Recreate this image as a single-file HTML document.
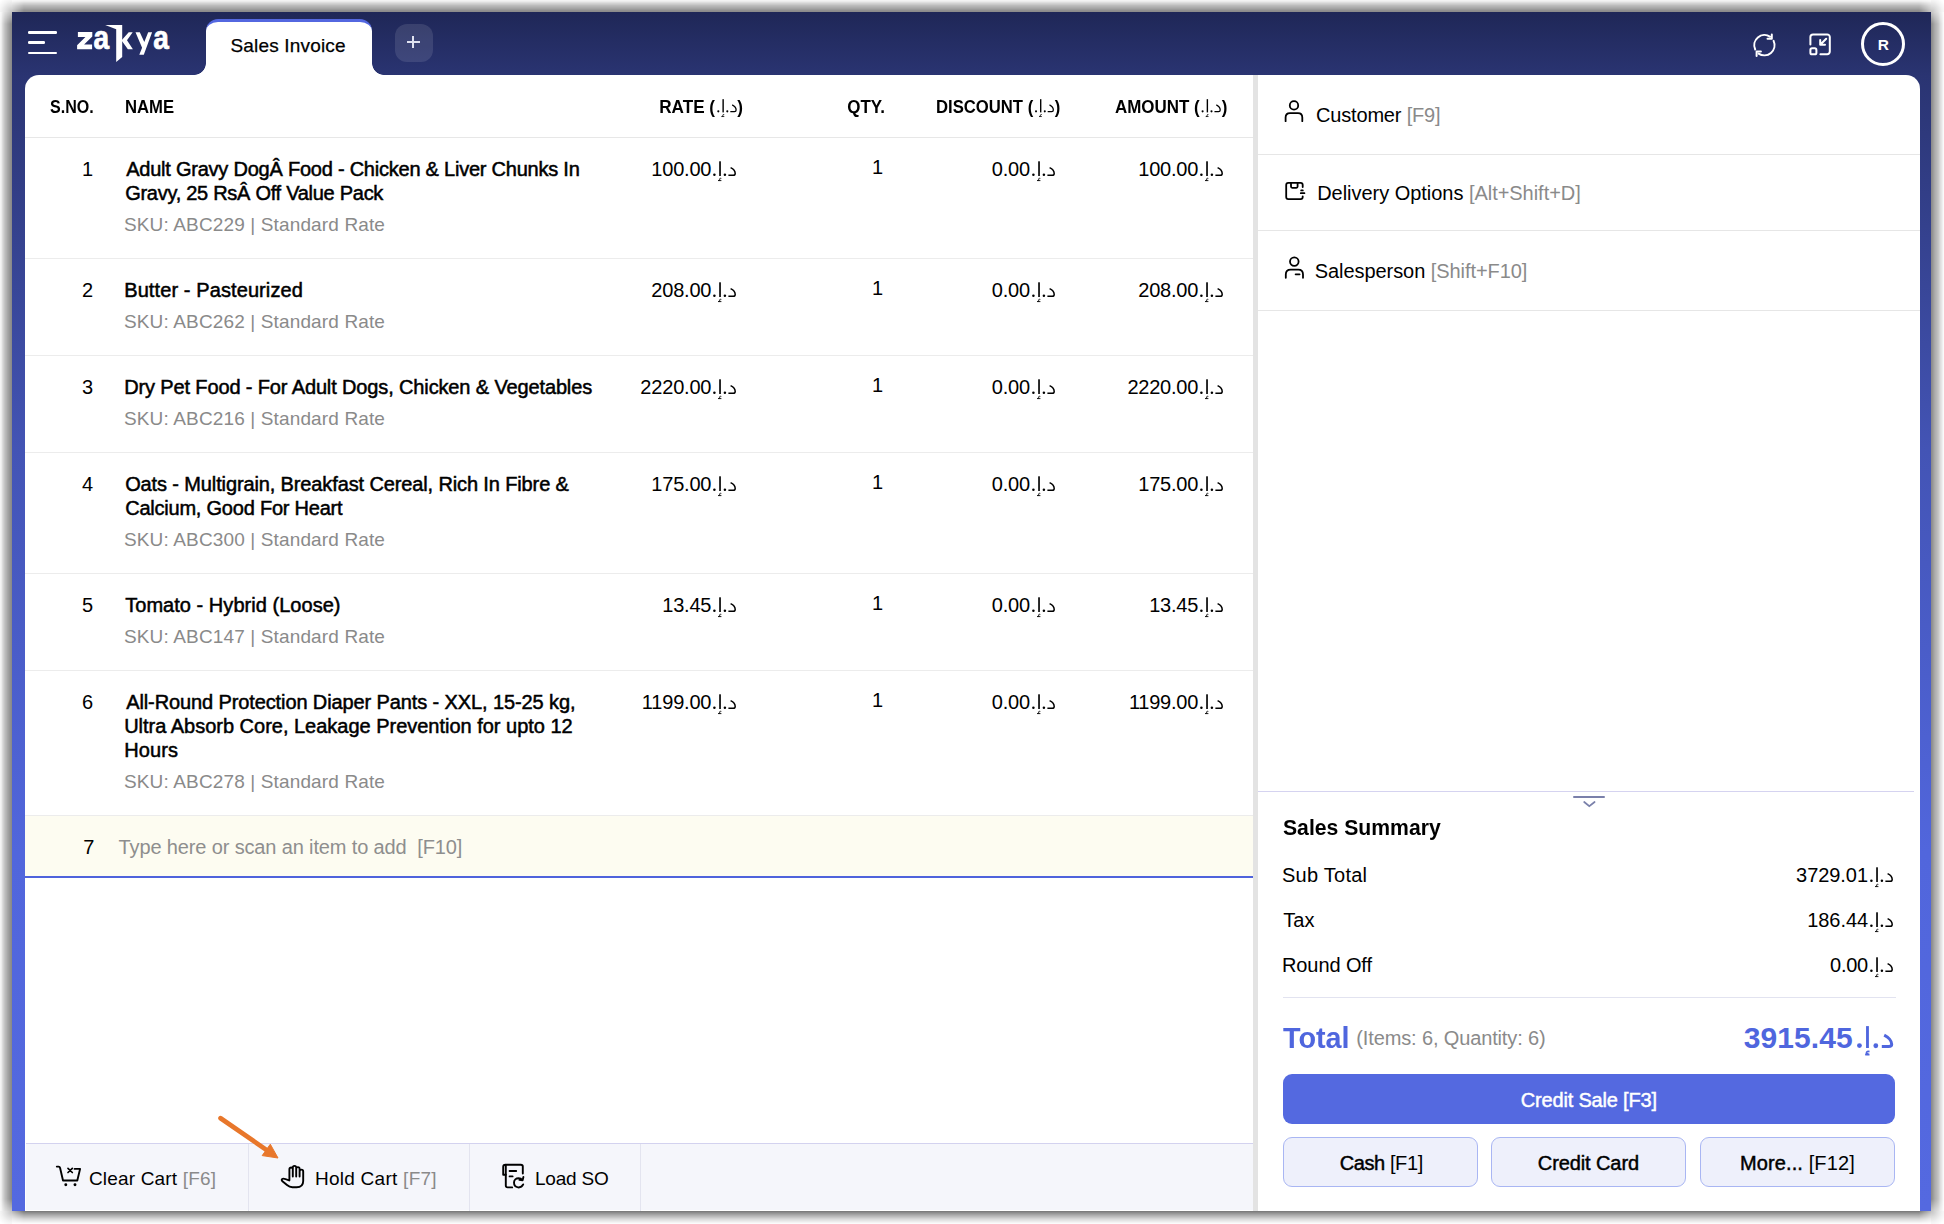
<!DOCTYPE html>
<html><head><meta charset="utf-8"><title>Sales Invoice</title>
<style>
html,body{margin:0;padding:0;}
body{width:1944px;height:1224px;position:relative;overflow:hidden;background:#fff;font-family:"Liberation Sans", sans-serif;}
.t{position:absolute;white-space:nowrap;font-family:"Liberation Sans", sans-serif;}
.aed{fill:currentColor;overflow:visible;}
#win{position:absolute;left:12px;top:12px;width:1919px;height:1199px;
background:linear-gradient(180deg,#1f2757 0%,#2a3472 5.3%,#4354b5 36.5%,#5166dc 70%,#5469e0 100%);
}
#tab{position:absolute;left:206px;top:19px;width:166px;height:56px;background:#fff;border-top:3.5px solid #5367e0;border-radius:12px 12px 0 0;box-sizing:border-box;}
</style></head><body>
<div style="position:absolute;left:0px;top:12px;width:12px;height:1199px;background:linear-gradient(to left,rgba(0,0,0,0.459) 0.5px,rgba(0,0,0,0.435) 1.5px,rgba(0,0,0,0.404) 2.5px,rgba(0,0,0,0.373) 3.5px,rgba(0,0,0,0.341) 4.5px,rgba(0,0,0,0.302) 5.5px,rgba(0,0,0,0.271) 6.5px,rgba(0,0,0,0.231) 7.5px,rgba(0,0,0,0.184) 8.5px,rgba(0,0,0,0.137) 9.5px,rgba(0,0,0,0.075) 10.5px,rgba(0,0,0,0.043) 11.5px,rgba(0,0,0,0) 12.5px);-webkit-mask-image:linear-gradient(to bottom, rgba(0,0,0,0.5) 0, #000 12px, #000 calc(100% - 12px), rgba(0,0,0,0.5) 100%);"></div>
<div style="position:absolute;left:12px;top:0px;width:1919px;height:12px;background:linear-gradient(to top,rgba(0,0,0,0.451) 0.5px,rgba(0,0,0,0.435) 1.5px,rgba(0,0,0,0.396) 2.5px,rgba(0,0,0,0.357) 3.5px,rgba(0,0,0,0.325) 4.5px,rgba(0,0,0,0.294) 5.5px,rgba(0,0,0,0.263) 6.5px,rgba(0,0,0,0.216) 7.5px,rgba(0,0,0,0.176) 8.5px,rgba(0,0,0,0.129) 9.5px,rgba(0,0,0,0.078) 10.5px,rgba(0,0,0,0.047) 11.5px,rgba(0,0,0,0) 12.5px);-webkit-mask-image:linear-gradient(to right, rgba(0,0,0,0.5) 0, #000 12px, #000 calc(100% - 12px), rgba(0,0,0,0.5) 100%);"></div>
<div style="position:absolute;left:1931px;top:12px;width:13px;height:1199px;background:linear-gradient(to right,rgba(0,0,0,0.451) 0.5px,rgba(0,0,0,0.420) 1.5px,rgba(0,0,0,0.380) 2.5px,rgba(0,0,0,0.341) 3.5px,rgba(0,0,0,0.310) 4.5px,rgba(0,0,0,0.286) 5.5px,rgba(0,0,0,0.255) 6.5px,rgba(0,0,0,0.224) 7.5px,rgba(0,0,0,0.176) 8.5px,rgba(0,0,0,0.129) 9.5px,rgba(0,0,0,0.098) 10.5px,rgba(0,0,0,0.059) 11.5px,rgba(0,0,0,0.020) 12.5px,rgba(0,0,0,0) 13.5px);-webkit-mask-image:linear-gradient(to bottom, rgba(0,0,0,0.5) 0, #000 12px, #000 calc(100% - 12px), rgba(0,0,0,0.5) 100%);"></div>
<div style="position:absolute;left:12px;top:1211px;width:1919px;height:13px;background:linear-gradient(to bottom,rgba(0,0,0,0.514) 0.5px,rgba(0,0,0,0.459) 1.5px,rgba(0,0,0,0.408) 2.5px,rgba(0,0,0,0.357) 3.5px,rgba(0,0,0,0.310) 4.5px,rgba(0,0,0,0.267) 5.5px,rgba(0,0,0,0.224) 6.5px,rgba(0,0,0,0.176) 7.5px,rgba(0,0,0,0.137) 8.5px,rgba(0,0,0,0.106) 9.5px,rgba(0,0,0,0.075) 10.5px,rgba(0,0,0,0.043) 11.5px,rgba(0,0,0,0.016) 12.5px,rgba(0,0,0,0) 13.5px);-webkit-mask-image:linear-gradient(to right, rgba(0,0,0,0.5) 0, #000 12px, #000 calc(100% - 12px), rgba(0,0,0,0.5) 100%);"></div>
<div style="position:absolute;left:0px;top:0px;width:12px;height:12px;background:radial-gradient(circle at 100% 100%, rgba(0,0,0,0.24) 0, rgba(0,0,0,0.13) 6px, rgba(0,0,0,0.05) 11px, rgba(0,0,0,0) 16px);"></div>
<div style="position:absolute;left:1931px;top:0px;width:13px;height:12px;background:radial-gradient(circle at 0 100%, rgba(0,0,0,0.24) 0, rgba(0,0,0,0.13) 6px, rgba(0,0,0,0.05) 11px, rgba(0,0,0,0) 16px);"></div>
<div style="position:absolute;left:0px;top:1211px;width:12px;height:13px;background:radial-gradient(circle at 100% 0, rgba(0,0,0,0.24) 0, rgba(0,0,0,0.13) 6px, rgba(0,0,0,0.05) 11px, rgba(0,0,0,0) 16px);"></div>
<div style="position:absolute;left:1931px;top:1211px;width:13px;height:13px;background:radial-gradient(circle at 0 0, rgba(0,0,0,0.24) 0, rgba(0,0,0,0.13) 6px, rgba(0,0,0,0.05) 11px, rgba(0,0,0,0) 16px);"></div>
<div id="win"></div>
<div style="position:absolute;left:25px;top:75px;width:1895px;height:1136px;background:#fff;border-radius:14px 14px 0 0;"></div>
<div id="tab"></div>
<div style="position:absolute;left:194px;top:63px;width:12px;height:12px;background:radial-gradient(circle 12px at 0 0, transparent 11.5px, #fff 12.2px);"></div>
<div style="position:absolute;left:372px;top:63px;width:12px;height:12px;background:radial-gradient(circle 12px at 100% 0, transparent 11.5px, #fff 12.2px);"></div>
<div class="t" id="tabtxt" style="font-size:19px;line-height:23.75px;font-weight:400;color:#000;top:33.54px;letter-spacing:0.184px;-webkit-text-stroke:0.25px #000;left:230.4px;">Sales Invoice</div>
<div style="position:absolute;left:395px;top:24px;width:38px;height:38px;background:rgba(255,255,255,0.11);border-radius:12px;"></div>
<div style="position:absolute;left:407px;top:41px;width:12.5px;height:2px;background:#dfe2f0;"></div>
<div style="position:absolute;left:412.2px;top:35.8px;width:2px;height:12.5px;background:#dfe2f0;"></div>
<div style="position:absolute;left:28px;top:31.2px;width:28.5px;height:2.5px;background:#fff;border-radius:1.2px;"></div>
<div style="position:absolute;left:28px;top:41.2px;width:17px;height:2.5px;background:#fff;border-radius:1.2px;"></div>
<div style="position:absolute;left:28px;top:51.5px;width:28.5px;height:2.5px;background:#fff;border-radius:1.2px;"></div>
<svg style="position:absolute;left:70px;top:20px" width="110" height="48" viewBox="70 20 110 48" fill="#fff">
<path d="M77.9 32.1 L92.3 32.1 L92.3 36.5 L84.1 44.4 L92.1 44.4 L92.1 49.3 L77.1 49.3 L77.1 45.2 L85.4 37 L77.9 37 Z"/>
<text x="0" y="0" font-family="Liberation Sans" font-weight="700" font-size="33" stroke="#fff" stroke-width="0.7" transform="translate(93.6 49) scale(0.85 1)">a</text>
<path d="M105.2 25.1 L122.2 25.1 L122.2 57 L116.2 61.9 L116.2 29.3 Z"/>
<path d="M121.9 39.9 L128.7 32.3 L132.7 32.3 L127 40.2 L132.9 49.3 L127.9 49.3 L121.9 40.9 Z"/>
<path d="M135.5 32.3 L139.8 32.3 L144.3 42 L148.2 32.3 L152.1 32.3 L143.8 54.8 L139.3 54.8 L142.1 47.7 Z"/>
<text x="0" y="0" font-family="Liberation Sans" font-weight="700" font-size="33" stroke="#fff" stroke-width="0.7" transform="translate(153.3 49) scale(0.85 1)">a</text>
</svg>
<svg style="position:absolute;left:1748px;top:30px" width="32" height="30" viewBox="1748 30 32 30" fill="none" stroke="#fff" stroke-width="2" stroke-linecap="round" stroke-linejoin="round">
<path d="M1770.2 36.8 A10.2 10.2 0 0 0 1755.2 49.5"/>
<path d="M1771.8 34.4 V38.7 H1767.5"/>
<path d="M1773.6 40.9 A10.2 10.2 0 0 1 1758.6 53.6"/>
<path d="M1756.6 56 V51.6 H1760.9"/>
</svg>
<svg style="position:absolute;left:1805px;top:29px" width="30" height="30" viewBox="1805 29 30 30" fill="none" stroke="#fff" stroke-width="2" stroke-linecap="round" stroke-linejoin="round">
<path d="M1810.4 44.5 V37 A2.6 2.6 0 0 1 1813 34.4 H1827.2 A2.6 2.6 0 0 1 1829.8 37 V51.6 A2.6 2.6 0 0 1 1827.2 54.2 H1820.4"/>
<rect x="1810.4" y="48.3" width="6" height="6" rx="1.6"/>
<path d="M1826.2 38.8 L1820.2 44.8 M1820.2 40 V44.8 H1825"/>
</svg>
<div style="position:absolute;left:1861px;top:22px;width:44px;height:44px;box-sizing:border-box;border:3.2px solid #fff;border-radius:50%;"></div>
<div class="t" style="font-size:15.5px;line-height:19.38px;font-weight:700;color:#fff;top:34.84px;left:1483.4px;width:800px;text-align:center;">R</div>
<div class="t" id="h_sno" style="font-size:18px;line-height:22.5px;font-weight:700;color:#000;top:95.71px;left:50.0px;transform:scaleX(0.8918);transform-origin:left center;">S.NO.</div>
<div class="t" id="h_name" style="font-size:18px;line-height:22.5px;font-weight:700;color:#000;top:95.71px;left:125.0px;transform:scaleX(0.9270);transform-origin:left center;">NAME</div>
<div class="t" id="h_rate" style="font-size:18px;line-height:22.5px;font-weight:700;color:#000;top:95.71px;right:1201.2px;text-align:right;transform:scaleX(0.9517);transform-origin:right center;">RATE (<svg class="aed" viewBox="0 -16 26 22" style="width:1.3em;height:1.1em;vertical-align:-0.3em"><circle cx="3.4" cy="-1.2" r="1.25"/><rect x="8.2" y="-14.7" width="1.65" height="14.7"/><path d="M10.3 2.4 C8.8 1.9 7.9 3.2 9.1 3.8 L7.2 4.6 L10.4 4.6" fill="none" stroke="currentColor" stroke-width="0.9"/><circle cx="13.9" cy="-1.2" r="1.25"/><path d="M19.6 -8.4 C22.2 -7.1 24.2 -4.8 24.2 -2.6 C24.2 -1.1 23.4 -0.8 22.2 -0.8 L17.4 -0.8" fill="none" stroke="currentColor" stroke-width="1.5"/></svg>)</div>
<div class="t" id="h_qty" style="font-size:18px;line-height:22.5px;font-weight:700;color:#000;top:95.71px;right:1059.2px;text-align:right;transform:scaleX(0.9438);transform-origin:right center;">QTY.</div>
<div class="t" id="h_disc" style="font-size:18px;line-height:22.5px;font-weight:700;color:#000;top:95.71px;right:884.0px;text-align:right;transform:scaleX(0.9254);transform-origin:right center;">DISCOUNT (<svg class="aed" viewBox="0 -16 26 22" style="width:1.3em;height:1.1em;vertical-align:-0.3em"><circle cx="3.4" cy="-1.2" r="1.25"/><rect x="8.2" y="-14.7" width="1.65" height="14.7"/><path d="M10.3 2.4 C8.8 1.9 7.9 3.2 9.1 3.8 L7.2 4.6 L10.4 4.6" fill="none" stroke="currentColor" stroke-width="0.9"/><circle cx="13.9" cy="-1.2" r="1.25"/><path d="M19.6 -8.4 C22.2 -7.1 24.2 -4.8 24.2 -2.6 C24.2 -1.1 23.4 -0.8 22.2 -0.8 L17.4 -0.8" fill="none" stroke="currentColor" stroke-width="1.5"/></svg>)</div>
<div class="t" id="h_amt" style="font-size:18px;line-height:22.5px;font-weight:700;color:#000;top:95.71px;right:717.0px;text-align:right;transform:scaleX(0.9412);transform-origin:right center;">AMOUNT (<svg class="aed" viewBox="0 -16 26 22" style="width:1.3em;height:1.1em;vertical-align:-0.3em"><circle cx="3.4" cy="-1.2" r="1.25"/><rect x="8.2" y="-14.7" width="1.65" height="14.7"/><path d="M10.3 2.4 C8.8 1.9 7.9 3.2 9.1 3.8 L7.2 4.6 L10.4 4.6" fill="none" stroke="currentColor" stroke-width="0.9"/><circle cx="13.9" cy="-1.2" r="1.25"/><path d="M19.6 -8.4 C22.2 -7.1 24.2 -4.8 24.2 -2.6 C24.2 -1.1 23.4 -0.8 22.2 -0.8 L17.4 -0.8" fill="none" stroke="currentColor" stroke-width="1.5"/></svg>)</div>
<div style="position:absolute;left:25px;top:137px;width:1228px;height:1px;background:#e7e7e7;"></div>
<div class="t" style="font-size:20px;line-height:25.0px;font-weight:400;color:#000;top:157.07px;right:1850.8px;text-align:right;">1</div>
<div class="t" id="n0_0" style="font-size:20px;line-height:25.0px;font-weight:400;color:#000;top:157.07px;letter-spacing:-0.23px;-webkit-text-stroke:0.5px #000;left:126.2px;">Adult Gravy DogÂ Food - Chicken &amp; Liver Chunks In</div>
<div class="t" id="n0_1" style="font-size:20px;line-height:25.0px;font-weight:400;color:#000;top:181.07px;letter-spacing:-0.277px;-webkit-text-stroke:0.5px #000;left:125.2px;">Gravy, 25 RsÂ Off Value Pack</div>
<div class="t" id="sku0" style="font-size:19px;line-height:23.75px;font-weight:400;color:#8a8a8a;top:213.04px;letter-spacing:0.137px;left:124.0px;">SKU: ABC229 | Standard Rate</div>
<div class="t" id="rate0" style="font-size:20px;line-height:25.0px;font-weight:400;color:#000;top:156.57px;letter-spacing:-0.185px;right:1206.7px;text-align:right;">100.00<svg class="aed" viewBox="0 -16 26 22" style="width:1.3em;height:1.1em;vertical-align:-0.3em"><circle cx="3.4" cy="-1.2" r="1.25"/><rect x="8.2" y="-14.7" width="1.65" height="14.7"/><path d="M10.3 2.4 C8.8 1.9 7.9 3.2 9.1 3.8 L7.2 4.6 L10.4 4.6" fill="none" stroke="currentColor" stroke-width="0.9"/><circle cx="13.9" cy="-1.2" r="1.25"/><path d="M19.6 -8.4 C22.2 -7.1 24.2 -4.8 24.2 -2.6 C24.2 -1.1 23.4 -0.8 22.2 -0.8 L17.4 -0.8" fill="none" stroke="currentColor" stroke-width="1.5"/></svg></div>
<div class="t" style="font-size:20px;line-height:25.0px;font-weight:400;color:#000;top:155.07px;right:1060.8px;text-align:right;">1</div>
<div class="t" id="disc0" style="font-size:20px;line-height:25.0px;font-weight:400;color:#000;top:156.57px;letter-spacing:-0.175px;right:888.0px;text-align:right;">0.00<svg class="aed" viewBox="0 -16 26 22" style="width:1.3em;height:1.1em;vertical-align:-0.3em"><circle cx="3.4" cy="-1.2" r="1.25"/><rect x="8.2" y="-14.7" width="1.65" height="14.7"/><path d="M10.3 2.4 C8.8 1.9 7.9 3.2 9.1 3.8 L7.2 4.6 L10.4 4.6" fill="none" stroke="currentColor" stroke-width="0.9"/><circle cx="13.9" cy="-1.2" r="1.25"/><path d="M19.6 -8.4 C22.2 -7.1 24.2 -4.8 24.2 -2.6 C24.2 -1.1 23.4 -0.8 22.2 -0.8 L17.4 -0.8" fill="none" stroke="currentColor" stroke-width="1.5"/></svg></div>
<div class="t" id="amt0" style="font-size:20px;line-height:25.0px;font-weight:400;color:#000;top:156.57px;letter-spacing:-0.235px;right:719.9000000000001px;text-align:right;">100.00<svg class="aed" viewBox="0 -16 26 22" style="width:1.3em;height:1.1em;vertical-align:-0.3em"><circle cx="3.4" cy="-1.2" r="1.25"/><rect x="8.2" y="-14.7" width="1.65" height="14.7"/><path d="M10.3 2.4 C8.8 1.9 7.9 3.2 9.1 3.8 L7.2 4.6 L10.4 4.6" fill="none" stroke="currentColor" stroke-width="0.9"/><circle cx="13.9" cy="-1.2" r="1.25"/><path d="M19.6 -8.4 C22.2 -7.1 24.2 -4.8 24.2 -2.6 C24.2 -1.1 23.4 -0.8 22.2 -0.8 L17.4 -0.8" fill="none" stroke="currentColor" stroke-width="1.5"/></svg></div>
<div style="position:absolute;left:25px;top:258px;width:1228px;height:1px;background:#ececec;"></div>
<div class="t" style="font-size:20px;line-height:25.0px;font-weight:400;color:#000;top:278.07px;right:1850.8px;text-align:right;">2</div>
<div class="t" id="n1_0" style="font-size:20px;line-height:25.0px;font-weight:400;color:#000;top:278.07px;letter-spacing:0.101px;-webkit-text-stroke:0.5px #000;left:124.2px;">Butter - Pasteurized</div>
<div class="t" id="sku1" style="font-size:19px;line-height:23.75px;font-weight:400;color:#8a8a8a;top:310.04px;letter-spacing:0.137px;left:124.0px;">SKU: ABC262 | Standard Rate</div>
<div class="t" id="rate1" style="font-size:20px;line-height:25.0px;font-weight:400;color:#000;top:277.57px;letter-spacing:-0.185px;right:1206.7px;text-align:right;">208.00<svg class="aed" viewBox="0 -16 26 22" style="width:1.3em;height:1.1em;vertical-align:-0.3em"><circle cx="3.4" cy="-1.2" r="1.25"/><rect x="8.2" y="-14.7" width="1.65" height="14.7"/><path d="M10.3 2.4 C8.8 1.9 7.9 3.2 9.1 3.8 L7.2 4.6 L10.4 4.6" fill="none" stroke="currentColor" stroke-width="0.9"/><circle cx="13.9" cy="-1.2" r="1.25"/><path d="M19.6 -8.4 C22.2 -7.1 24.2 -4.8 24.2 -2.6 C24.2 -1.1 23.4 -0.8 22.2 -0.8 L17.4 -0.8" fill="none" stroke="currentColor" stroke-width="1.5"/></svg></div>
<div class="t" style="font-size:20px;line-height:25.0px;font-weight:400;color:#000;top:276.07px;right:1060.8px;text-align:right;">1</div>
<div class="t" id="disc1" style="font-size:20px;line-height:25.0px;font-weight:400;color:#000;top:277.57px;letter-spacing:-0.175px;right:888.0px;text-align:right;">0.00<svg class="aed" viewBox="0 -16 26 22" style="width:1.3em;height:1.1em;vertical-align:-0.3em"><circle cx="3.4" cy="-1.2" r="1.25"/><rect x="8.2" y="-14.7" width="1.65" height="14.7"/><path d="M10.3 2.4 C8.8 1.9 7.9 3.2 9.1 3.8 L7.2 4.6 L10.4 4.6" fill="none" stroke="currentColor" stroke-width="0.9"/><circle cx="13.9" cy="-1.2" r="1.25"/><path d="M19.6 -8.4 C22.2 -7.1 24.2 -4.8 24.2 -2.6 C24.2 -1.1 23.4 -0.8 22.2 -0.8 L17.4 -0.8" fill="none" stroke="currentColor" stroke-width="1.5"/></svg></div>
<div class="t" id="amt1" style="font-size:20px;line-height:25.0px;font-weight:400;color:#000;top:277.57px;letter-spacing:-0.235px;right:719.9000000000001px;text-align:right;">208.00<svg class="aed" viewBox="0 -16 26 22" style="width:1.3em;height:1.1em;vertical-align:-0.3em"><circle cx="3.4" cy="-1.2" r="1.25"/><rect x="8.2" y="-14.7" width="1.65" height="14.7"/><path d="M10.3 2.4 C8.8 1.9 7.9 3.2 9.1 3.8 L7.2 4.6 L10.4 4.6" fill="none" stroke="currentColor" stroke-width="0.9"/><circle cx="13.9" cy="-1.2" r="1.25"/><path d="M19.6 -8.4 C22.2 -7.1 24.2 -4.8 24.2 -2.6 C24.2 -1.1 23.4 -0.8 22.2 -0.8 L17.4 -0.8" fill="none" stroke="currentColor" stroke-width="1.5"/></svg></div>
<div style="position:absolute;left:25px;top:355px;width:1228px;height:1px;background:#ececec;"></div>
<div class="t" style="font-size:20px;line-height:25.0px;font-weight:400;color:#000;top:375.07px;right:1850.8px;text-align:right;">3</div>
<div class="t" id="n2_0" style="font-size:20px;line-height:25.0px;font-weight:400;color:#000;top:375.07px;letter-spacing:-0.134px;-webkit-text-stroke:0.5px #000;left:124.2px;">Dry Pet Food - For Adult Dogs, Chicken &amp; Vegetables</div>
<div class="t" id="sku2" style="font-size:19px;line-height:23.75px;font-weight:400;color:#8a8a8a;top:407.04px;letter-spacing:0.137px;left:124.0px;">SKU: ABC216 | Standard Rate</div>
<div class="t" id="rate2" style="font-size:20px;line-height:25.0px;font-weight:400;color:#000;top:374.57px;letter-spacing:-0.185px;right:1206.7px;text-align:right;">2220.00<svg class="aed" viewBox="0 -16 26 22" style="width:1.3em;height:1.1em;vertical-align:-0.3em"><circle cx="3.4" cy="-1.2" r="1.25"/><rect x="8.2" y="-14.7" width="1.65" height="14.7"/><path d="M10.3 2.4 C8.8 1.9 7.9 3.2 9.1 3.8 L7.2 4.6 L10.4 4.6" fill="none" stroke="currentColor" stroke-width="0.9"/><circle cx="13.9" cy="-1.2" r="1.25"/><path d="M19.6 -8.4 C22.2 -7.1 24.2 -4.8 24.2 -2.6 C24.2 -1.1 23.4 -0.8 22.2 -0.8 L17.4 -0.8" fill="none" stroke="currentColor" stroke-width="1.5"/></svg></div>
<div class="t" style="font-size:20px;line-height:25.0px;font-weight:400;color:#000;top:373.07px;right:1060.8px;text-align:right;">1</div>
<div class="t" id="disc2" style="font-size:20px;line-height:25.0px;font-weight:400;color:#000;top:374.57px;letter-spacing:-0.175px;right:888.0px;text-align:right;">0.00<svg class="aed" viewBox="0 -16 26 22" style="width:1.3em;height:1.1em;vertical-align:-0.3em"><circle cx="3.4" cy="-1.2" r="1.25"/><rect x="8.2" y="-14.7" width="1.65" height="14.7"/><path d="M10.3 2.4 C8.8 1.9 7.9 3.2 9.1 3.8 L7.2 4.6 L10.4 4.6" fill="none" stroke="currentColor" stroke-width="0.9"/><circle cx="13.9" cy="-1.2" r="1.25"/><path d="M19.6 -8.4 C22.2 -7.1 24.2 -4.8 24.2 -2.6 C24.2 -1.1 23.4 -0.8 22.2 -0.8 L17.4 -0.8" fill="none" stroke="currentColor" stroke-width="1.5"/></svg></div>
<div class="t" id="amt2" style="font-size:20px;line-height:25.0px;font-weight:400;color:#000;top:374.57px;letter-spacing:-0.235px;right:719.9000000000001px;text-align:right;">2220.00<svg class="aed" viewBox="0 -16 26 22" style="width:1.3em;height:1.1em;vertical-align:-0.3em"><circle cx="3.4" cy="-1.2" r="1.25"/><rect x="8.2" y="-14.7" width="1.65" height="14.7"/><path d="M10.3 2.4 C8.8 1.9 7.9 3.2 9.1 3.8 L7.2 4.6 L10.4 4.6" fill="none" stroke="currentColor" stroke-width="0.9"/><circle cx="13.9" cy="-1.2" r="1.25"/><path d="M19.6 -8.4 C22.2 -7.1 24.2 -4.8 24.2 -2.6 C24.2 -1.1 23.4 -0.8 22.2 -0.8 L17.4 -0.8" fill="none" stroke="currentColor" stroke-width="1.5"/></svg></div>
<div style="position:absolute;left:25px;top:452px;width:1228px;height:1px;background:#ececec;"></div>
<div class="t" style="font-size:20px;line-height:25.0px;font-weight:400;color:#000;top:472.07px;right:1850.8px;text-align:right;">4</div>
<div class="t" id="n3_0" style="font-size:20px;line-height:25.0px;font-weight:400;color:#000;top:472.07px;letter-spacing:-0.126px;-webkit-text-stroke:0.5px #000;left:125.2px;">Oats - Multigrain, Breakfast Cereal, Rich In Fibre &amp;</div>
<div class="t" id="n3_1" style="font-size:20px;line-height:25.0px;font-weight:400;color:#000;top:496.07px;letter-spacing:-0.223px;-webkit-text-stroke:0.5px #000;left:125.2px;">Calcium, Good For Heart</div>
<div class="t" id="sku3" style="font-size:19px;line-height:23.75px;font-weight:400;color:#8a8a8a;top:528.04px;letter-spacing:0.137px;left:124.0px;">SKU: ABC300 | Standard Rate</div>
<div class="t" id="rate3" style="font-size:20px;line-height:25.0px;font-weight:400;color:#000;top:471.57px;letter-spacing:-0.185px;right:1206.7px;text-align:right;">175.00<svg class="aed" viewBox="0 -16 26 22" style="width:1.3em;height:1.1em;vertical-align:-0.3em"><circle cx="3.4" cy="-1.2" r="1.25"/><rect x="8.2" y="-14.7" width="1.65" height="14.7"/><path d="M10.3 2.4 C8.8 1.9 7.9 3.2 9.1 3.8 L7.2 4.6 L10.4 4.6" fill="none" stroke="currentColor" stroke-width="0.9"/><circle cx="13.9" cy="-1.2" r="1.25"/><path d="M19.6 -8.4 C22.2 -7.1 24.2 -4.8 24.2 -2.6 C24.2 -1.1 23.4 -0.8 22.2 -0.8 L17.4 -0.8" fill="none" stroke="currentColor" stroke-width="1.5"/></svg></div>
<div class="t" style="font-size:20px;line-height:25.0px;font-weight:400;color:#000;top:470.07px;right:1060.8px;text-align:right;">1</div>
<div class="t" id="disc3" style="font-size:20px;line-height:25.0px;font-weight:400;color:#000;top:471.57px;letter-spacing:-0.175px;right:888.0px;text-align:right;">0.00<svg class="aed" viewBox="0 -16 26 22" style="width:1.3em;height:1.1em;vertical-align:-0.3em"><circle cx="3.4" cy="-1.2" r="1.25"/><rect x="8.2" y="-14.7" width="1.65" height="14.7"/><path d="M10.3 2.4 C8.8 1.9 7.9 3.2 9.1 3.8 L7.2 4.6 L10.4 4.6" fill="none" stroke="currentColor" stroke-width="0.9"/><circle cx="13.9" cy="-1.2" r="1.25"/><path d="M19.6 -8.4 C22.2 -7.1 24.2 -4.8 24.2 -2.6 C24.2 -1.1 23.4 -0.8 22.2 -0.8 L17.4 -0.8" fill="none" stroke="currentColor" stroke-width="1.5"/></svg></div>
<div class="t" id="amt3" style="font-size:20px;line-height:25.0px;font-weight:400;color:#000;top:471.57px;letter-spacing:-0.235px;right:719.9000000000001px;text-align:right;">175.00<svg class="aed" viewBox="0 -16 26 22" style="width:1.3em;height:1.1em;vertical-align:-0.3em"><circle cx="3.4" cy="-1.2" r="1.25"/><rect x="8.2" y="-14.7" width="1.65" height="14.7"/><path d="M10.3 2.4 C8.8 1.9 7.9 3.2 9.1 3.8 L7.2 4.6 L10.4 4.6" fill="none" stroke="currentColor" stroke-width="0.9"/><circle cx="13.9" cy="-1.2" r="1.25"/><path d="M19.6 -8.4 C22.2 -7.1 24.2 -4.8 24.2 -2.6 C24.2 -1.1 23.4 -0.8 22.2 -0.8 L17.4 -0.8" fill="none" stroke="currentColor" stroke-width="1.5"/></svg></div>
<div style="position:absolute;left:25px;top:573px;width:1228px;height:1px;background:#ececec;"></div>
<div class="t" style="font-size:20px;line-height:25.0px;font-weight:400;color:#000;top:593.07px;right:1850.8px;text-align:right;">5</div>
<div class="t" id="n4_0" style="font-size:20px;line-height:25.0px;font-weight:400;color:#000;top:593.07px;letter-spacing:0.036px;-webkit-text-stroke:0.5px #000;left:125.2px;">Tomato - Hybrid (Loose)</div>
<div class="t" id="sku4" style="font-size:19px;line-height:23.75px;font-weight:400;color:#8a8a8a;top:625.04px;letter-spacing:0.137px;left:124.0px;">SKU: ABC147 | Standard Rate</div>
<div class="t" id="rate4" style="font-size:20px;line-height:25.0px;font-weight:400;color:#000;top:592.57px;letter-spacing:-0.185px;right:1206.7px;text-align:right;">13.45<svg class="aed" viewBox="0 -16 26 22" style="width:1.3em;height:1.1em;vertical-align:-0.3em"><circle cx="3.4" cy="-1.2" r="1.25"/><rect x="8.2" y="-14.7" width="1.65" height="14.7"/><path d="M10.3 2.4 C8.8 1.9 7.9 3.2 9.1 3.8 L7.2 4.6 L10.4 4.6" fill="none" stroke="currentColor" stroke-width="0.9"/><circle cx="13.9" cy="-1.2" r="1.25"/><path d="M19.6 -8.4 C22.2 -7.1 24.2 -4.8 24.2 -2.6 C24.2 -1.1 23.4 -0.8 22.2 -0.8 L17.4 -0.8" fill="none" stroke="currentColor" stroke-width="1.5"/></svg></div>
<div class="t" style="font-size:20px;line-height:25.0px;font-weight:400;color:#000;top:591.07px;right:1060.8px;text-align:right;">1</div>
<div class="t" id="disc4" style="font-size:20px;line-height:25.0px;font-weight:400;color:#000;top:592.57px;letter-spacing:-0.175px;right:888.0px;text-align:right;">0.00<svg class="aed" viewBox="0 -16 26 22" style="width:1.3em;height:1.1em;vertical-align:-0.3em"><circle cx="3.4" cy="-1.2" r="1.25"/><rect x="8.2" y="-14.7" width="1.65" height="14.7"/><path d="M10.3 2.4 C8.8 1.9 7.9 3.2 9.1 3.8 L7.2 4.6 L10.4 4.6" fill="none" stroke="currentColor" stroke-width="0.9"/><circle cx="13.9" cy="-1.2" r="1.25"/><path d="M19.6 -8.4 C22.2 -7.1 24.2 -4.8 24.2 -2.6 C24.2 -1.1 23.4 -0.8 22.2 -0.8 L17.4 -0.8" fill="none" stroke="currentColor" stroke-width="1.5"/></svg></div>
<div class="t" id="amt4" style="font-size:20px;line-height:25.0px;font-weight:400;color:#000;top:592.57px;letter-spacing:-0.235px;right:719.9000000000001px;text-align:right;">13.45<svg class="aed" viewBox="0 -16 26 22" style="width:1.3em;height:1.1em;vertical-align:-0.3em"><circle cx="3.4" cy="-1.2" r="1.25"/><rect x="8.2" y="-14.7" width="1.65" height="14.7"/><path d="M10.3 2.4 C8.8 1.9 7.9 3.2 9.1 3.8 L7.2 4.6 L10.4 4.6" fill="none" stroke="currentColor" stroke-width="0.9"/><circle cx="13.9" cy="-1.2" r="1.25"/><path d="M19.6 -8.4 C22.2 -7.1 24.2 -4.8 24.2 -2.6 C24.2 -1.1 23.4 -0.8 22.2 -0.8 L17.4 -0.8" fill="none" stroke="currentColor" stroke-width="1.5"/></svg></div>
<div style="position:absolute;left:25px;top:670px;width:1228px;height:1px;background:#ececec;"></div>
<div class="t" style="font-size:20px;line-height:25.0px;font-weight:400;color:#000;top:690.07px;right:1850.8px;text-align:right;">6</div>
<div class="t" id="n5_0" style="font-size:20px;line-height:25.0px;font-weight:400;color:#000;top:690.07px;letter-spacing:-0.11px;-webkit-text-stroke:0.5px #000;left:126.2px;">All-Round Protection Diaper Pants - XXL, 15-25 kg,</div>
<div class="t" id="n5_1" style="font-size:20px;line-height:25.0px;font-weight:400;color:#000;top:714.07px;letter-spacing:-0.014px;-webkit-text-stroke:0.5px #000;left:124.2px;">Ultra Absorb Core, Leakage Prevention for upto 12</div>
<div class="t" id="n5_2" style="font-size:20px;line-height:25.0px;font-weight:400;color:#000;top:738.07px;letter-spacing:0.1px;-webkit-text-stroke:0.5px #000;left:124.2px;">Hours</div>
<div class="t" id="sku5" style="font-size:19px;line-height:23.75px;font-weight:400;color:#8a8a8a;top:770.04px;letter-spacing:0.137px;left:124.0px;">SKU: ABC278 | Standard Rate</div>
<div class="t" id="rate5" style="font-size:20px;line-height:25.0px;font-weight:400;color:#000;top:689.57px;letter-spacing:-0.185px;right:1206.7px;text-align:right;">1199.00<svg class="aed" viewBox="0 -16 26 22" style="width:1.3em;height:1.1em;vertical-align:-0.3em"><circle cx="3.4" cy="-1.2" r="1.25"/><rect x="8.2" y="-14.7" width="1.65" height="14.7"/><path d="M10.3 2.4 C8.8 1.9 7.9 3.2 9.1 3.8 L7.2 4.6 L10.4 4.6" fill="none" stroke="currentColor" stroke-width="0.9"/><circle cx="13.9" cy="-1.2" r="1.25"/><path d="M19.6 -8.4 C22.2 -7.1 24.2 -4.8 24.2 -2.6 C24.2 -1.1 23.4 -0.8 22.2 -0.8 L17.4 -0.8" fill="none" stroke="currentColor" stroke-width="1.5"/></svg></div>
<div class="t" style="font-size:20px;line-height:25.0px;font-weight:400;color:#000;top:688.07px;right:1060.8px;text-align:right;">1</div>
<div class="t" id="disc5" style="font-size:20px;line-height:25.0px;font-weight:400;color:#000;top:689.57px;letter-spacing:-0.175px;right:888.0px;text-align:right;">0.00<svg class="aed" viewBox="0 -16 26 22" style="width:1.3em;height:1.1em;vertical-align:-0.3em"><circle cx="3.4" cy="-1.2" r="1.25"/><rect x="8.2" y="-14.7" width="1.65" height="14.7"/><path d="M10.3 2.4 C8.8 1.9 7.9 3.2 9.1 3.8 L7.2 4.6 L10.4 4.6" fill="none" stroke="currentColor" stroke-width="0.9"/><circle cx="13.9" cy="-1.2" r="1.25"/><path d="M19.6 -8.4 C22.2 -7.1 24.2 -4.8 24.2 -2.6 C24.2 -1.1 23.4 -0.8 22.2 -0.8 L17.4 -0.8" fill="none" stroke="currentColor" stroke-width="1.5"/></svg></div>
<div class="t" id="amt5" style="font-size:20px;line-height:25.0px;font-weight:400;color:#000;top:689.57px;letter-spacing:-0.235px;right:719.9000000000001px;text-align:right;">1199.00<svg class="aed" viewBox="0 -16 26 22" style="width:1.3em;height:1.1em;vertical-align:-0.3em"><circle cx="3.4" cy="-1.2" r="1.25"/><rect x="8.2" y="-14.7" width="1.65" height="14.7"/><path d="M10.3 2.4 C8.8 1.9 7.9 3.2 9.1 3.8 L7.2 4.6 L10.4 4.6" fill="none" stroke="currentColor" stroke-width="0.9"/><circle cx="13.9" cy="-1.2" r="1.25"/><path d="M19.6 -8.4 C22.2 -7.1 24.2 -4.8 24.2 -2.6 C24.2 -1.1 23.4 -0.8 22.2 -0.8 L17.4 -0.8" fill="none" stroke="currentColor" stroke-width="1.5"/></svg></div>
<div style="position:absolute;left:25px;top:815px;width:1228px;height:1px;background:#ececec;"></div>
<div style="position:absolute;left:25px;top:816px;width:1228px;height:60px;background:#fdfcf1;"></div>
<div style="position:absolute;left:25px;top:876px;width:1228px;height:2px;background:#4f63dc;"></div>
<div class="t" id="seven" style="font-size:20px;line-height:25.0px;font-weight:400;color:#000;top:835.37px;right:1849.6px;text-align:right;">7</div>
<div class="t" id="ph" style="font-size:20px;line-height:25.0px;font-weight:400;color:#8e8e8e;top:835.37px;letter-spacing:-0.139px;left:118.6px;">Type here or scan an item to add&nbsp; [F10]</div>
<div style="position:absolute;left:25px;top:1143px;width:1228px;height:68px;background:#fff;"></div>
<div style="position:absolute;left:26px;top:1143px;width:1227px;height:67px;background:#f5f6fb;border-top:1px solid #d3d2ef;box-sizing:border-box;"></div>
<div style="position:absolute;left:248px;top:1144px;width:1px;height:67px;background:#e3e4ef;"></div>
<div style="position:absolute;left:469px;top:1144px;width:1px;height:67px;background:#e3e4ef;"></div>
<div style="position:absolute;left:640px;top:1144px;width:1px;height:67px;background:#e3e4ef;"></div>
<div class="t" id="cc" style="font-size:19px;line-height:23.75px;font-weight:400;color:#000;top:1167.24px;letter-spacing:0.186px;left:88.9px;">Clear Cart <span style="color:#8a8a8a">[F6]</span></div>
<div class="t" id="hc" style="font-size:19px;line-height:23.75px;font-weight:400;color:#000;top:1167.24px;letter-spacing:0.269px;left:314.9px;">Hold Cart <span style="color:#8a8a8a">[F7]</span></div>
<div class="t" id="lso" style="font-size:19px;line-height:23.75px;font-weight:400;color:#000;top:1167.44px;letter-spacing:-0.199px;left:535.0px;">Load SO</div>
<svg style="position:absolute;left:54px;top:1162px" width="30" height="28" viewBox="54 1162 30 28" fill="none" stroke="#000" stroke-width="1.9" stroke-linecap="round" stroke-linejoin="round">
<path d="M56.8 1166.6 H58.6 C59.4 1166.6 59.9 1167.1 60.1 1167.9 L63 1180.5 H77.3 L80.1 1168.9 H74.6"/>
<path d="M68 1168.4 L72.3 1172.5 M72.3 1168.4 L68 1172.5" stroke-width="1.7"/>
<circle cx="65.8" cy="1184.8" r="1.45" fill="#000" stroke="none"/>
<circle cx="75" cy="1184.8" r="1.45" fill="#000" stroke="none"/>
</svg>
<svg style="position:absolute;left:278px;top:1162px" width="30" height="30" viewBox="278 1162 30 30" fill="none" stroke="#000" stroke-width="1.9" stroke-linecap="round" stroke-linejoin="round">
<path d="M289.4 1180 V1169.2 A1.7 1.7 0 0 1 292.8 1169.2 V1176.6 M292.8 1176.6 V1167.6 A1.7 1.7 0 0 1 296.2 1167.6 V1176.6 M296.2 1176.6 V1168.8 A1.7 1.7 0 0 1 299.6 1168.8 V1176.6 M299.6 1176.6 V1171.4 A1.7 1.7 0 0 1 303.2 1171.4 V1181 C303.2 1185.2 300.6 1187.2 296.6 1187.2 H292.4 C290 1187.2 288.4 1186.2 287 1185 L282.4 1181.2 C281.2 1180.2 281.6 1178.6 283.2 1178.6 C285 1178.6 287.4 1179.6 289.4 1180.4"/>
</svg>
<svg style="position:absolute;left:500px;top:1162px" width="28" height="28" viewBox="500 1162 28 28" fill="none" stroke="#000" stroke-width="1.9" stroke-linecap="round" stroke-linejoin="round">
<path d="M522.8 1173.6 V1166.6 C522.8 1165.4 522 1164.8 520.8 1164.8 H505.4 C504 1164.8 503.2 1165.6 503.2 1166.8 V1174.8 H505.8"/>
<path d="M505.8 1165 V1185.6 C505.8 1186.6 506.4 1187.4 507.6 1187.4 H512.2"/>
<path d="M509.6 1171 H516.2 M509.6 1176.4 H512.6"/>
<path d="M523.2 1184.4 C522.2 1186.6 520.2 1187.6 518 1187.4 C515.4 1187 514 1185 514 1182.6 C514 1180 516 1178.2 518.6 1178.2 C520.2 1178.2 521.6 1179 522.4 1180.2 M523.4 1177 L522.6 1180.4 L519.4 1179.8"/>
</svg>
<svg style="position:absolute;left:210px;top:1110px" width="80" height="55" viewBox="210 1110 80 55">
<path d="M220.6 1118.2 L266 1149.6" stroke="#e8772b" stroke-width="4.8" stroke-linecap="round"/>
<path d="M278 1158 L270.3 1144.2 L262.2 1155.6 Z" fill="#e8772b" stroke="#e8772b" stroke-width="1" stroke-linejoin="round"/>
</svg>
<div style="position:absolute;left:1253px;top:75px;width:5px;height:1136px;background:#e3e3e3;"></div>
<div style="position:absolute;left:1258px;top:154px;width:662px;height:1px;background:#e6e6e6;"></div>
<div style="position:absolute;left:1258px;top:230px;width:662px;height:1px;background:#e6e6e6;"></div>
<div style="position:absolute;left:1258px;top:310px;width:662px;height:1px;background:#e6e6e6;"></div>
<div class="t" id="cust" style="font-size:20px;line-height:25.0px;font-weight:400;color:#000;top:102.57px;letter-spacing:-0.189px;left:1316.1px;">Customer <span style="color:#8a8a8a">[F9]</span></div>
<div class="t" id="deliv" style="font-size:20px;line-height:25.0px;font-weight:400;color:#000;top:180.87px;letter-spacing:-0.033px;left:1317.2px;">Delivery Options <span style="color:#8a8a8a">[Alt+Shift+D]</span></div>
<div class="t" id="sales" style="font-size:20px;line-height:25.0px;font-weight:400;color:#000;top:258.57px;letter-spacing:-0.069px;left:1314.8px;">Salesperson <span style="color:#8a8a8a">[Shift+F10]</span></div>
<svg style="position:absolute;left:1280px;top:95px" width="28" height="30" viewBox="1280 95 28 30" fill="none" stroke="#000" stroke-width="1.8" stroke-linecap="round">
<circle cx="1294" cy="105.4" r="4.2"/>
<path d="M1285.6 121.2 V117.6 C1285.6 115 1287.4 113.2 1290 113.2 H1298 C1300.6 113.2 1302.3 115 1302.3 117.6 V121.2"/>
</svg>
<svg style="position:absolute;left:1280px;top:176px" width="30" height="30" viewBox="1280 176 30 30" fill="none" stroke="#000" stroke-width="1.8" stroke-linecap="round" stroke-linejoin="round">
<path d="M1302.7 187 V185 C1302.7 183.6 1302 182.9 1300.6 182.9 H1288.3 C1286.9 182.9 1286.2 183.6 1286.2 185 V197 C1286.2 198.4 1286.9 199.1 1288.3 199.1 H1300.6 C1302 199.1 1302.7 198.4 1302.7 197 V196.3"/>
<path d="M1291 183 V186.6 C1291 187.4 1291.4 187.8 1292.2 187.8 H1296.4 C1297.2 187.8 1297.6 187.4 1297.6 186.6 V183"/>
<path d="M1301.2 190.4 H1302.8 M1300.8 193.2 H1304.4"/>
</svg>
<svg style="position:absolute;left:1280px;top:252px" width="30" height="30" viewBox="1280 252 30 30" fill="none" stroke="#000" stroke-width="1.8" stroke-linecap="round">
<circle cx="1294.3" cy="261.6" r="4.3"/>
<path d="M1285.8 277.8 V274.5 C1285.8 271.6 1287.8 269.7 1290.7 269.7 H1298.3 C1301.2 269.7 1303 271.6 1303 274.5 V277.8"/>
<path d="M1295.6 274.3 H1299.6"/>
</svg>
<div style="position:absolute;left:1258px;top:791px;width:656px;height:1px;background:#d5d3f0;"></div>
<div style="position:absolute;left:1573px;top:796px;width:32px;height:2.2px;background:#7a80aa;border-radius:1px;"></div>
<svg style="position:absolute;left:1580px;top:797px" width="18" height="12" viewBox="1580 797 18 12" fill="none" stroke="#7a80aa" stroke-width="1.7" stroke-linecap="round"><path d="M1584.2 802 L1589.3 806.2 L1594.6 802"/></svg>
<div class="t" id="ss" style="font-size:22px;line-height:27.5px;font-weight:700;color:#000;top:814.13px;left:1282.5px;transform:scaleX(0.9621);transform-origin:left center;">Sales Summary</div>
<div class="t" id="subl" style="font-size:20px;line-height:25.0px;font-weight:400;color:#000;top:862.57px;letter-spacing:0.25px;left:1282.0px;">Sub Total</div>
<div class="t" id="taxl" style="font-size:20px;line-height:25.0px;font-weight:400;color:#000;top:907.57px;left:1283.3px;">Tax</div>
<div class="t" id="rol" style="font-size:20px;line-height:25.0px;font-weight:400;color:#000;top:952.87px;letter-spacing:-0.1px;left:1282.0px;">Round Off</div>
<div class="t" id="subv" style="font-size:20px;line-height:25.0px;font-weight:400;color:#000;top:862.57px;letter-spacing:-0.055px;right:50.0px;text-align:right;">3729.01<svg class="aed" viewBox="0 -16 26 22" style="width:1.3em;height:1.1em;vertical-align:-0.3em"><circle cx="3.4" cy="-1.2" r="1.25"/><rect x="8.2" y="-14.7" width="1.65" height="14.7"/><path d="M10.3 2.4 C8.8 1.9 7.9 3.2 9.1 3.8 L7.2 4.6 L10.4 4.6" fill="none" stroke="currentColor" stroke-width="0.9"/><circle cx="13.9" cy="-1.2" r="1.25"/><path d="M19.6 -8.4 C22.2 -7.1 24.2 -4.8 24.2 -2.6 C24.2 -1.1 23.4 -0.8 22.2 -0.8 L17.4 -0.8" fill="none" stroke="currentColor" stroke-width="1.5"/></svg></div>
<div class="t" id="taxv" style="font-size:20px;line-height:25.0px;font-weight:400;color:#000;top:907.57px;letter-spacing:-0.069px;right:50.0px;text-align:right;">186.44<svg class="aed" viewBox="0 -16 26 22" style="width:1.3em;height:1.1em;vertical-align:-0.3em"><circle cx="3.4" cy="-1.2" r="1.25"/><rect x="8.2" y="-14.7" width="1.65" height="14.7"/><path d="M10.3 2.4 C8.8 1.9 7.9 3.2 9.1 3.8 L7.2 4.6 L10.4 4.6" fill="none" stroke="currentColor" stroke-width="0.9"/><circle cx="13.9" cy="-1.2" r="1.25"/><path d="M19.6 -8.4 C22.2 -7.1 24.2 -4.8 24.2 -2.6 C24.2 -1.1 23.4 -0.8 22.2 -0.8 L17.4 -0.8" fill="none" stroke="currentColor" stroke-width="1.5"/></svg></div>
<div class="t" id="rov" style="font-size:20px;line-height:25.0px;font-weight:400;color:#000;top:952.87px;letter-spacing:-0.25px;right:50.0px;text-align:right;">0.00<svg class="aed" viewBox="0 -16 26 22" style="width:1.3em;height:1.1em;vertical-align:-0.3em"><circle cx="3.4" cy="-1.2" r="1.25"/><rect x="8.2" y="-14.7" width="1.65" height="14.7"/><path d="M10.3 2.4 C8.8 1.9 7.9 3.2 9.1 3.8 L7.2 4.6 L10.4 4.6" fill="none" stroke="currentColor" stroke-width="0.9"/><circle cx="13.9" cy="-1.2" r="1.25"/><path d="M19.6 -8.4 C22.2 -7.1 24.2 -4.8 24.2 -2.6 C24.2 -1.1 23.4 -0.8 22.2 -0.8 L17.4 -0.8" fill="none" stroke="currentColor" stroke-width="1.5"/></svg></div>
<div style="position:absolute;left:1283px;top:997px;width:613px;height:1px;background:#e2e3f0;"></div>
<div class="t" id="total" style="font-size:30px;line-height:37.5px;font-weight:700;color:#4f66de;top:1018.86px;left:1282.8px;transform:scaleX(0.9588);transform-origin:left center;">Total</div>
<div class="t" id="items" style="font-size:20px;line-height:25.0px;font-weight:400;color:#8a8a8a;top:1026.07px;letter-spacing:-0.133px;left:1356.3px;">(Items: 6, Quantity: 6)</div>
<div class="t" id="totv" style="font-size:30px;line-height:37.5px;font-weight:700;color:#4f66de;top:1018.65px;letter-spacing:0.075px;right:50.799999999999955px;text-align:right;">3915.45<svg class="aed" viewBox="0 -16 27 22" style="width:1.35em;height:1.1em;vertical-align:-0.3em"><circle cx="4.3" cy="-1.6" r="1.6"/><rect x="8.7" y="-14.6" width="1.9" height="14.6"/><path d="M11 2.4 C9.3 1.9 8.3 3.2 9.6 3.8 L8.2 4.4 L11 4.4" fill="none" stroke="currentColor" stroke-width="1.1"/><circle cx="15.2" cy="-1.5" r="1.6"/><path d="M20.8 -8.6 C23.6 -7.2 25.8 -4.6 25.8 -2.5 C25.8 -1.2 25 -1 23.8 -1 L19.2 -1" fill="none" stroke="currentColor" stroke-width="2.0"/></svg></div>
<div style="position:absolute;left:1283px;top:1074px;width:612px;height:50px;background:#5469e0;border-radius:9px;"></div>
<div class="t" id="bcs" style="font-size:20px;line-height:25.0px;font-weight:400;color:#fff;top:1087.77px;letter-spacing:-0.186px;-webkit-text-stroke:0.45px #fff;left:1188.85px;width:800px;text-align:center;">Credit Sale [F3]</div>
<div style="position:absolute;left:1283px;top:1137px;width:195px;height:50px;background:#eef0fb;border:1px solid #a9b6f3;border-radius:9px;box-sizing:border-box;"></div>
<div class="t" id="bcash" style="font-size:20px;line-height:25.0px;font-weight:400;color:#000;top:1150.57px;letter-spacing:-0.393px;left:981.25px;width:800px;text-align:center;"><span style="-webkit-text-stroke:0.45px #000">Cash</span><span> [F1]</span></div>
<div style="position:absolute;left:1491px;top:1137px;width:195px;height:50px;background:#eef0fb;border:1px solid #a9b6f3;border-radius:9px;box-sizing:border-box;"></div>
<div class="t" id="bcc" style="font-size:20px;line-height:25.0px;font-weight:400;color:#000;top:1150.57px;letter-spacing:-0.1px;left:1188.4px;width:800px;text-align:center;"><span style="-webkit-text-stroke:0.45px #000">Credit Card</span></div>
<div style="position:absolute;left:1699.5px;top:1137px;width:195.0px;height:50px;background:#eef0fb;border:1px solid #a9b6f3;border-radius:9px;box-sizing:border-box;"></div>
<div class="t" id="bmore" style="font-size:20px;line-height:25.0px;font-weight:400;color:#000;top:1150.57px;letter-spacing:0.116px;left:1397.4px;width:800px;text-align:center;"><span style="-webkit-text-stroke:0.45px #000">More...</span><span> [F12]</span></div>
</body></html>
